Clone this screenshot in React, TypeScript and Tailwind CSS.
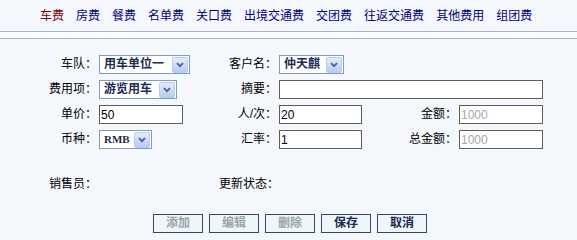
import type { ReactNode } from 'react'

const tabs = ['车费', '房费', '餐费', '名单费', '关口费', '出境交通费', '交团费', '往返交通费', '其他费用', '组团费']

const Chevron = () => (
    <span className="flex h-[16px] w-[16px] items-center justify-center rounded-[2px] border border-[#b9cbef] bg-gradient-to-b from-[#e3ecfd] to-[#b6cbf3]">
        <svg width="8" height="6" viewBox="0 0 8 6">
            <path d="M1 1.2 L4 4.2 L7 1.2" fill="none" stroke="#4b5f8c" strokeWidth="1.8" />
        </svg>
    </span>
)

const Select = ({ width, children }: { width: string; children: ReactNode }) => (
    <div className={`flex h-[19px] ${width} items-center justify-between border border-[#7f9db9] bg-white pl-[4px] pr-[1px]`}>
        <span className="font-bold leading-[17px] text-[#1d2c52]">{children}</span>
        <Chevron />
    </div>
)

const Input = ({ width, value, disabled }: { width: string; value?: string; disabled?: boolean }) => (
    <input
        readOnly
        value={value ?? ''}
        className={`h-[19px] ${width} border border-[#5c5c5c] bg-white pl-[1px] text-[12px] leading-[17px] outline-none ${disabled ? 'text-[#a6a6a6]' : 'text-black'}`}
    />
)

const Label = ({ children }: { children: ReactNode }) => (
    <div className="h-[19px] text-right leading-[19px] text-black">{children}</div>
)

const Button = ({ children, disabled }: { children: ReactNode; disabled?: boolean }) => (
    <button
        className={`h-[19px] w-[50px] border border-[#34485f] bg-[#eef5fb] text-[12px] leading-[17px] font-bold ${disabled ? 'text-[#9aa3ab]' : 'text-[#1b2b4a]'}`}
    >
        {children}
    </button>
)

export default function App() {
    return (
        <div className="h-[240px] w-[577px] overflow-hidden bg-[#f4f8fc] text-[12px] font-['Liberation_Sans','Noto_Sans_CJK_SC',sans-serif]">
            <div className="flex h-[31px] items-center gap-[12px] pl-[40px]">
                {tabs.map((tab, i) => (
                    <span key={tab} className={i === 0 ? 'text-[#800000]' : 'text-[#000080]'}>
                        {tab}
                    </span>
                ))}
            </div>
            <div className="h-[8px] border-y border-[#a8b8c8] bg-[#fafcfe]" />

            <div className="grid grid-cols-[97px_122px_58px_122px_58px_84px] gap-y-[6px] pt-[16px] [&>*:nth-child(even)]:ml-[2px]">
                <Label>车队：</Label>
                <div><Select width="w-[91px]">用车单位一</Select></div>
                <Label>客户名：</Label>
                <div><Select width="w-[65px]">仲天麒</Select></div>
                <div />
                <div />

                <Label>费用项：</Label>
                <div><Select width="w-[78px]">游览用车</Select></div>
                <Label>摘要：</Label>
                <div className="col-span-3"><Input width="w-[264px]" /></div>

                <Label>单价：</Label>
                <div><Input width="w-[84px]" value="50" /></div>
                <Label>人/次：</Label>
                <div><Input width="w-[83px]" value="20" /></div>
                <Label>金额：</Label>
                <div><Input width="w-[84px]" value="1000" disabled /></div>

                <Label>币种：</Label>
                <div>
                    <Select width="w-[53px]">
                        <span className="font-['Liberation_Serif',serif] text-[11px]">RMB</span>
                    </Select>
                </div>
                <Label>汇率：</Label>
                <div><Input width="w-[83px]" value="1" /></div>
                <Label>总金额：</Label>
                <div><Input width="w-[84px]" value="1000" disabled /></div>
            </div>

            <div className="mt-[26px] grid grid-cols-[97px_122px_60px]">
                <Label>销售员：</Label>
                <div />
                <Label>更新状态：</Label>
            </div>

            <div className="mt-[20px] flex gap-[6px] pl-[153px]">
                <Button disabled>添加</Button>
                <Button disabled>编辑</Button>
                <Button disabled>删除</Button>
                <Button>保存</Button>
                <Button>取消</Button>
            </div>
        </div>
    )
}
